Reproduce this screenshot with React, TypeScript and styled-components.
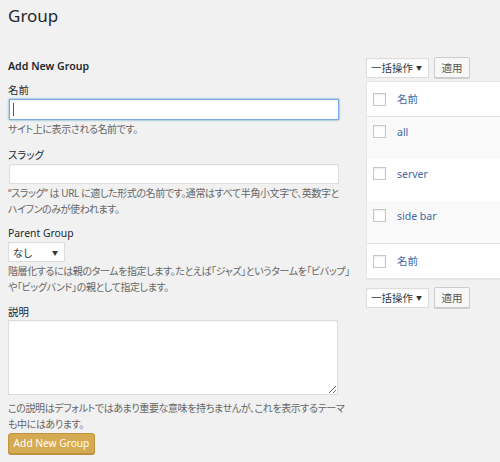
import styled, { createGlobalStyle } from "styled-components";

const GlobalStyle = createGlobalStyle`
    html, body{
        margin:0;
        padding:0;
        background:#f1f1f1;
        overflow:hidden;
    }
    body{
        font-family:"Noto Sans", "Noto Sans CJK JP", sans-serif;
        color:#23282d;
        font-feature-settings:"palt";
    }
`;

const Page = styled.div`
    width:500px;
    height:462px;
    padding:0 0 0 8px;
    box-sizing:border-box;
    overflow:hidden;
`;

const Title = styled.h1`
    margin:0;
    padding:3.5px 0 0 0;
    font-size:17px;
    font-weight:400;
    line-height:24px;
    color:#23282d;
`;

const Columns = styled.div`
    display:flex;
    flex-direction:row;
    align-items:flex-start;
    margin-top:29.5px;
`;

const LeftCol = styled.div`
    width:346px;
    flex-shrink:0;
    padding-top:2px;
`;

const RightCol = styled.div`
    margin-left:12px;
    width:200px;
    flex-shrink:0;
`;

const SectionTitle = styled.h2`
    margin:0 0 10px 0;
    font-size:10.6px;
    font-weight:600;
    line-height:14px;
`;

const Field = styled.div<{ gap?: number }>`
    margin-bottom:${p => p.gap ?? 10}px;
`;

const Label = styled.div<{ mb?: number }>`
    font-size:10.4px;
    line-height:14px;
    height:14px;
    margin-bottom:${p => p.mb ?? 2}px;
    white-space:nowrap;
`;

const InputWrap = styled.div`
    position:relative;
    width:330px;
`;

const TextInput = styled.input<{ focused?: boolean }>`
    display:block;
    width:330px;
    height:${p => p.focused ? 21 : 20}px;
    box-sizing:border-box;
    margin:0 0 0 1px;
    padding:0 4px;
    background:#fff;
    border:1px solid ${p => p.focused ? "#7aa7e0" : "#ddd"};
    box-shadow:${p => p.focused ? "0 0 2px rgba(30,140,190,.8)" : "inset 0 1px 2px rgba(0,0,0,.04)"};
    outline:none;
    font-family:inherit;
    font-size:11px;
`;

const Caret = styled.span`
    position:absolute;
    left:5px;
    top:4px;
    width:1px;
    height:13px;
    background:#555;
`;

const Help = styled.p<{ mt?: number }>`
    margin:${p => p.mt ?? 1}px 0 0 0;
    font-size:10px;
    letter-spacing:-0.4px;
    line-height:16px;
    color:#666;
    width:344px;
`;

const Word = styled.span`
    white-space:nowrap;
`;

const SelectBox = styled.div<{ w: number }>`
    display:flex;
    align-items:center;
    justify-content:space-between;
    width:${p => p.w}px;
    height:20px;
    box-sizing:border-box;
    padding:0 6px 0 4px;
    background:#fff;
    border:1px solid #ddd;
    box-shadow:inset 0 1px 2px rgba(0,0,0,.04);
    font-size:10.5px;
    color:#32373c;
    white-space:nowrap;
`;

const Arrow = styled.span`
    font-size:6px;
    color:#333;
`;

const TextArea = styled.textarea`
    display:block;
    width:330px;
    height:75px;
    box-sizing:border-box;
    margin:0;
    background:#fff;
    border:1px solid #ddd;
    box-shadow:inset 0 1px 2px rgba(0,0,0,.04);
    outline:none;
    font-family:inherit;
`;

const PrimaryButton = styled.button`
    display:block;
    margin-top:1px;
    width:87px;
    height:21px;
    padding:0;
    background:#d5aa52;
    border:1px solid #c0943c;
    border-radius:3px;
    box-shadow:0 1px 0 #b8913c;
    color:#fff;
    font-family:inherit;
    font-size:10.2px;
    line-height:19px;
`;

const BulkBar = styled.div`
    display:flex;
    flex-direction:row;
    align-items:center;
    gap:5px;
    height:21px;
`;

const SecondaryButton = styled.button`
    width:36px;
    height:21px;
    padding:0;
    background:#f7f7f7;
    border:1px solid #ccc;
    border-radius:2px;
    box-shadow:0 1px 0 #ccc;
    color:#555;
    font-family:inherit;
    font-size:10.5px;
`;

const Table = styled.div`
    margin:3px 0 8px 0;
    background:#fff;
    border:1px solid #e5e5e5;
    box-shadow:0 1px 1px rgba(0,0,0,.04);
`;

const Row = styled.div<{ striped?: boolean; head?: boolean; foot?: boolean }>`
    display:flex;
    flex-direction:row;
    align-items:${p => p.head || p.foot ? "center" : "flex-start"};
    height:${p => p.head || p.foot ? 35 : 42}px;
    box-sizing:border-box;
    padding:${p => p.head || p.foot ? "0" : "8px"} 0 0 6px;
    background:${p => p.striped ? "#f9f9f9" : "#fff"};
    border-bottom:${p => p.head ? "1px solid #e1e1e1" : "none"};
    border-top:${p => p.foot ? "1px solid #e1e1e1" : "none"};
`;

const Check = styled.span`
    display:inline-block;
    width:13px;
    height:13px;
    box-sizing:border-box;
    background:#fff;
    border:1px solid #c6c6c6;
    box-shadow:inset 0 1px 2px rgba(0,0,0,.08);
    flex-shrink:0;
`;

const NameLink = styled.a`
    margin-left:11px;
    font-size:10.5px;
    line-height:14px;
    color:#3d6aa3;
    text-decoration:none;
`;

const terms = ["all", "server", "side bar"];

const Bulk = () => (
    <BulkBar>
        <SelectBox w={63}>
            <span>一括操作</span>
            <Arrow>▼</Arrow>
        </SelectBox>
        <SecondaryButton>適用</SecondaryButton>
    </BulkBar>
);

const App = () => {
    return (
        <Page>
            <GlobalStyle />
            <Title>Group</Title>
            <Columns>
                <LeftCol>
                    <SectionTitle>Add New Group</SectionTitle>
                    <Field gap={11}>
                        <Label>名前</Label>
                        <InputWrap>
                            <TextInput focused />
                            <Caret />
                        </InputWrap>
                        <Help>サイト上に表示される名前です。</Help>
                    </Field>
                    <Field gap={9}>
                        <Label>スラッグ</Label>
                        <TextInput />
                        <Help>“スラッグ” は URL に適した形式の名前です。通常はすべて半角小文字で、英数字と<Word>ハイフン</Word>のみが使われます。</Help>
                    </Field>
                    <Field gap={10}>
                        <Label>Parent Group</Label>
                        <SelectBox w={57}>
                            <span>なし</span>
                            <Arrow>▼</Arrow>
                        </SelectBox>
                        <Help>階層化するには親のタームを指定します。たとえば「ジャズ」というタームを「ビバップ」や「ビッグバンド」の親として指定します。</Help>
                    </Field>
                    <Field gap={0}>
                        <Label mb={1}>説明</Label>
                        <TextArea />
                        <Help mt={5}>この説明はデフォルトではあまり重要な意味を持ちませんが、これを表示するテーマも中にはあります。</Help>
                    </Field>
                    <PrimaryButton>Add New Group</PrimaryButton>
                </LeftCol>
                <RightCol>
                    <Bulk />
                    <Table>
                        <Row head>
                            <Check />
                            <NameLink>名前</NameLink>
                        </Row>
                        {terms.map((t, i) => (
                            <Row key={t} striped={i % 2 === 0}>
                                <Check />
                                <NameLink>{t}</NameLink>
                            </Row>
                        ))}
                        <Row foot>
                            <Check />
                            <NameLink>名前</NameLink>
                        </Row>
                    </Table>
                    <Bulk />
                </RightCol>
            </Columns>
        </Page>
    );
};

export default App;
